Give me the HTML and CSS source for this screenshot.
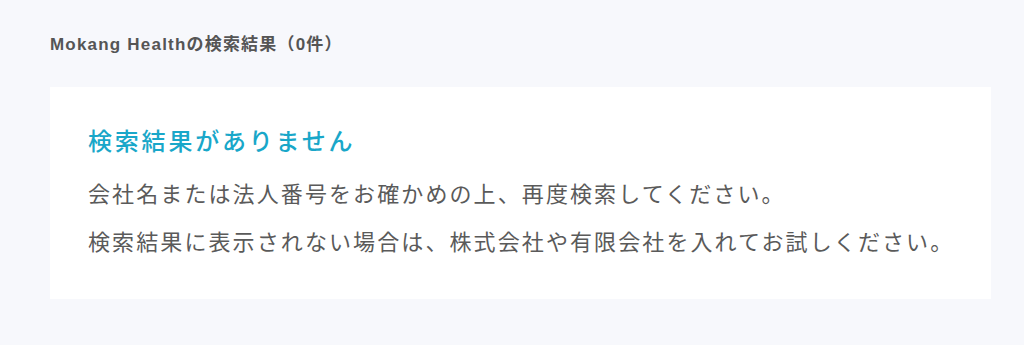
FILE: index.html
```html
<!DOCTYPE html>
<html lang="ja">
<head>
  <meta charset="UTF-8">
  <title>検索結果</title>
  <link rel="stylesheet" href="styles.css">
</head>
<body>

  <h1 class="result-title">Mokang Healthの検索結果（0件）</h1>

  <div class="result-card">
    <h2 class="empty-heading">検索結果がありません</h2>
    <p class="empty-text">
      会社名または法人番号をお確かめの上、再度検索してください。<br>
      検索結果に表示されない場合は、株式会社や有限会社を入れてお試しください。
    </p>
  </div>

</body>
</html>
```

FILE: styles.css
```css
body {
  margin: 0;
  padding: 34px 33px 0 50px;
  background-color: #f7f8fc;
  font-family: "Noto Sans CJK JP", "Noto Sans", sans-serif;
  color: #555;
}

.result-title {
  margin: 0 0 31px;
  font-family: "Liberation Sans", "Noto Sans CJK JP", sans-serif;
  font-size: 17px;
  font-weight: 600;
  line-height: 22px;
  letter-spacing: 1.2px;
  color: #555;
}

.result-card {
  background-color: #fff;
  padding: 35px 20px 33px 38px;
  height: 212px;
  box-sizing: border-box;
}

.empty-heading {
  margin: 0 0 10px;
  font-size: 24px;
  font-weight: 500;
  line-height: 36px;
  letter-spacing: 2.8px;
  color: #19a7c9;
}

.empty-text {
  margin: 0;
  font-size: 22px;
  line-height: 48px;
  letter-spacing: 2.1px;
  color: #5a5a5a;
  white-space: nowrap;
}
```
